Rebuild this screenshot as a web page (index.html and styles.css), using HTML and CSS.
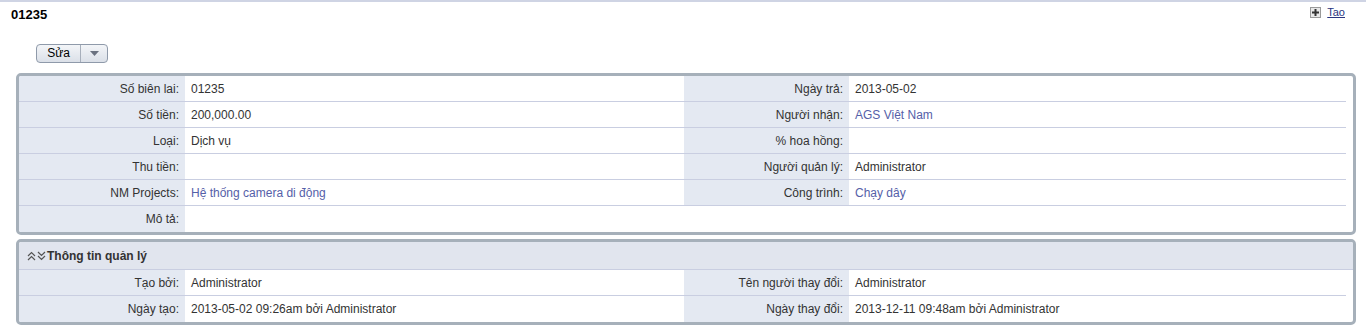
FILE: index.html
```html
<!DOCTYPE html>
<html lang="vi">
<head>
<meta charset="utf-8">
<link rel="stylesheet" href="styles.css">
</head>
<body>
<div class="topbar">
  <h1 class="title">01235</h1>
  <a class="create" href="#"><span class="plus"><svg width="11" height="11" viewBox="0 0 11 11"><rect x="0.5" y="0.5" width="10" height="10" fill="#e8e8e8" stroke="#9a9a9a"/><path d="M5.5 2v7M2 5.5h7" stroke="#333" stroke-width="2"/></svg></span><span class="create-text">Tao</span></a>
</div>
<div class="actions">
  <div class="btn-group">
    <span class="btn-main">Sửa</span>
    <span class="btn-arrow"><svg width="9" height="5" viewBox="0 0 9 5"><path d="M0 0h9L4.5 5z" fill="#6b7280"/></svg></span>
  </div>
</div>

<div class="panel">
  <table class="grid">
    <tr><td class="lbl">Số biên lai:</td><td class="val">01235</td><td class="lbl">Ngày trả:</td><td class="val">2013-05-02</td></tr>
    <tr><td class="lbl">Số tiền:</td><td class="val">200,000.00</td><td class="lbl">Người nhận:</td><td class="val"><a href="#">AGS Việt Nam</a></td></tr>
    <tr><td class="lbl">Loại:</td><td class="val">Dịch vụ</td><td class="lbl">% hoa hồng:</td><td class="val"></td></tr>
    <tr><td class="lbl">Thu tiền:</td><td class="val"></td><td class="lbl">Người quản lý:</td><td class="val">Administrator</td></tr>
    <tr><td class="lbl">NM Projects:</td><td class="val"><a href="#">Hệ thống camera di động</a></td><td class="lbl">Công trình:</td><td class="val"><a href="#">Chạy dây</a></td></tr>
    <tr class="last"><td class="lbl">Mô tả:</td><td class="val" colspan="3"></td></tr>
  </table>
</div>

<div class="panel panel2">
  <div class="panel-head">
    <svg class="chev" width="19" height="10" viewBox="0 0 19 10"><path d="M1 5l3.5-3.5L8 5M1 9l3.5-3.5L8 9" fill="none" stroke="#555" stroke-width="1.2"/><path d="M11 1l3.5 3.5L18 1M11 5l3.5 3.5L18 5" fill="none" stroke="#555" stroke-width="1.2"/></svg>
    <span>Thông tin quản lý</span>
  </div>
  <table class="grid">
    <tr><td class="lbl">Tạo bởi:</td><td class="val">Administrator</td><td class="lbl">Tên người thay đổi:</td><td class="val">Administrator</td></tr>
    <tr class="last"><td class="lbl">Ngày tạo:</td><td class="val">2013-05-02 09:26am bởi Administrator</td><td class="lbl">Ngày thay đổi:</td><td class="val">2013-12-11 09:48am bởi Administrator</td></tr>
  </table>
</div>
</body>
</html>
```
FILE: styles.css
```css
html, body {
  margin: 0;
  padding: 0;
  background: #fff;
  font-family: "Liberation Sans", Arial, sans-serif;
  font-size: 12px;
  color: #333;
}
.topbar {
  border-top: 2px solid #cfd4e4;
  display: flex;
  justify-content: space-between;
  align-items: flex-start;
  padding: 0 21px 0 11px;
  height: 29px;
}
.title {
  margin: 5px 0 0 0;
  font-size: 13px;
  font-weight: bold;
  color: #000;
  line-height: 15px;
}
.create {
  display: flex;
  align-items: center;
  gap: 6px;
  margin-top: 4px;
  color: #2a3580;
  text-decoration: none;
  font-size: 11px;
  line-height: 12px;
}
.plus { display: flex; }
.create-text { text-decoration: underline; }
.actions {
  padding-left: 36px;
  margin-top: 13px;
  height: 29px;
}
.btn-group {
  display: inline-flex;
  height: 17px;
  border: 1px solid #8f9aaa;
  border-radius: 4px;
  background: linear-gradient(#f3f5f8, #dbe0e8);
  align-items: stretch;
}
.btn-main {
  width: 43px;
  text-align: center;
  line-height: 17px;
  color: #000;
  font-size: 12px;
  border-right: 1px solid #a7afbb;
}
.btn-arrow {
  width: 26px;
  display: flex;
  align-items: center;
  justify-content: center;
}
.panel {
  margin: 0 10px 0 16px;
  border: 3px solid #a6b0ba;
  border-radius: 5px;
  background: #fff;
  overflow: hidden;
}
.panel2 { margin-top: 4px; }
.grid {
  width: 1327px;
  border-collapse: separate;
  border-spacing: 0;
  table-layout: fixed;
}
.grid td {
  height: 25px;
  padding: 0;
  border-bottom: 1px solid #c9cee1;
  vertical-align: middle;
  white-space: nowrap;
  box-sizing: border-box;
}
.grid td { height: 26px; }
.grid tr.last td { border-bottom: none; height: 26px; }
.lbl {
  width: 166px;
  background: #e4e9f2;
  text-align: right;
  padding-right: 6px !important;
}
.val {
  padding-left: 6px !important;
  width: 499px;
}
.grid td:nth-child(3) { width: 165px; }
.grid td:nth-child(4) { width: 497px; }
.val a { color: #5560a8; text-decoration: none; }
.panel-head {
  height: 28px;
  box-sizing: border-box;
  background: #e1e5ee;
  border-bottom: 1px solid #c9cee1;
  display: flex;
  align-items: center;
  padding-left: 8px;
  gap: 1px;
  font-weight: bold;
  color: #333;
}
.chev { display: block; }
```
